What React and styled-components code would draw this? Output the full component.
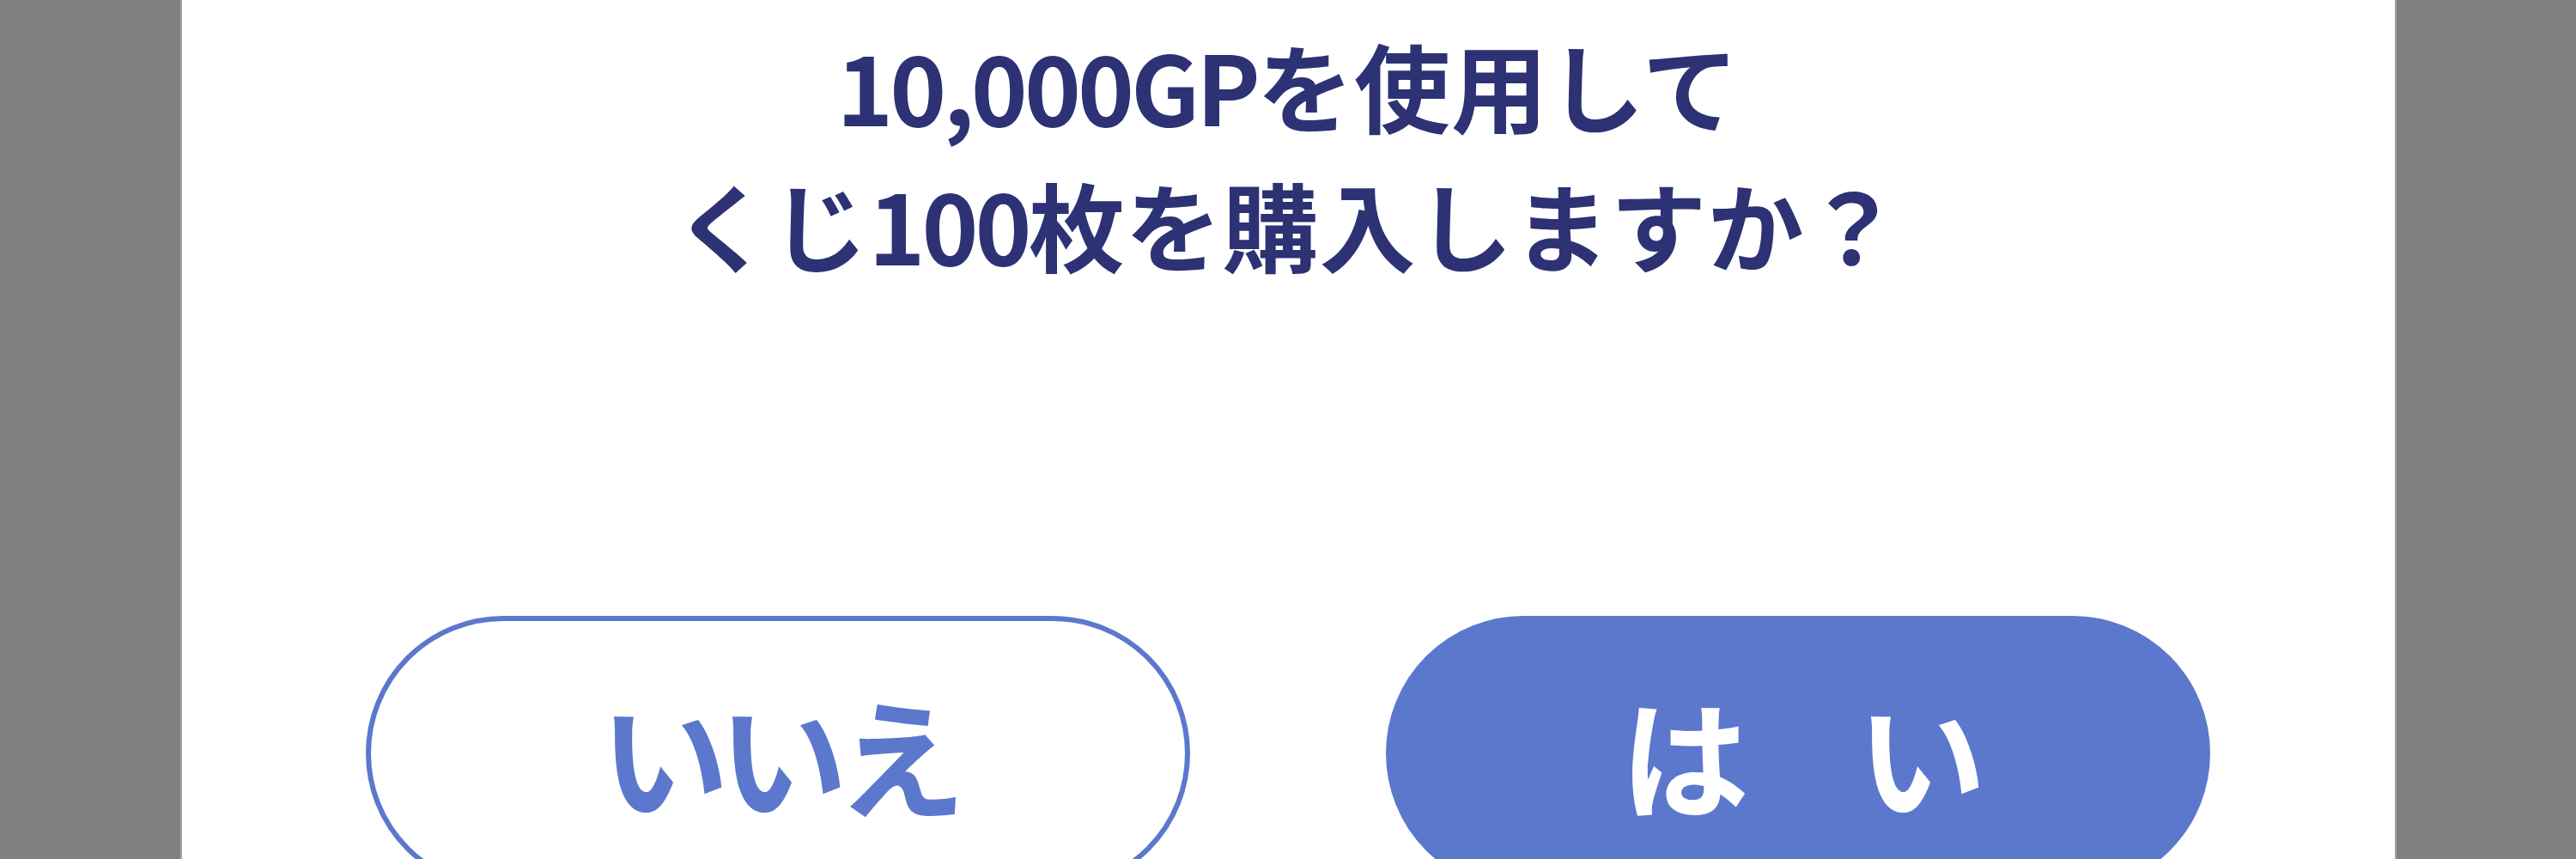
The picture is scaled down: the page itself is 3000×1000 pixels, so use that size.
import React from "react";
import styled, { createGlobalStyle } from "styled-components";

const GlobalStyle = createGlobalStyle`
  html, body {
    margin: 0;
    padding: 0;
    background: #808080;
    overflow: hidden;
  }
  body {
    font-family: "Noto Sans CJK JP", "Noto Sans", sans-serif;
  }
`;

const Overlay = styled.div`
  width: 100%;
  height: 1000px;
  display: flex;
  justify-content: center;
  background: #808080;
`;

const Dialog = styled.div`
  width: 2577px;
  height: 100%;
  background: #ffffff;
  box-shadow: 0 0 0 2px #a6a6a6;
  display: flex;
  flex-direction: column;
  align-items: center;
  padding-top: 17px;
  box-sizing: border-box;
`;

const Message = styled.p`
  margin: 0;
  color: #2c3274;
  font-size: 112px;
  font-weight: 700;
  line-height: 162px;
  letter-spacing: 1px;
  text-align: center;
`;

const Digits = styled.span`
  letter-spacing: -4px;
`;

const ButtonRow = styled.div`
  display: flex;
  gap: 228px;
  margin-top: 376px;
`;

const Button = styled.button`
  width: 960px;
  height: 320px;
  border-radius: 160px;
  box-sizing: border-box;
  border: 6px solid #5c78cd;
  background: ${(p) => (p.$primary ? "#5c78cd" : "#ffffff")};
  color: ${(p) => (p.$primary ? "#ffffff" : "#5c78cd")};
  font-family: "Noto Sans CJK JP", "Noto Sans", sans-serif;
  font-size: 150px;
  font-weight: 700;
  letter-spacing: -12px;
  line-height: 1;
  display: flex;
  align-items: center;
  justify-content: center;
  padding: 0;
  cursor: pointer;
`;

export default function App() {
  return (
    <>
      <GlobalStyle />
      <Overlay>
        <Dialog>
          <Message>
            <Digits>10,000GP</Digits>を使用して
            <br />
            くじ<Digits>100</Digits>枚を購入しますか？
          </Message>
          <ButtonRow>
            <Button>いいえ</Button>
            <Button $primary>は　い</Button>
          </ButtonRow>
        </Dialog>
      </Overlay>
    </>
  );
}
